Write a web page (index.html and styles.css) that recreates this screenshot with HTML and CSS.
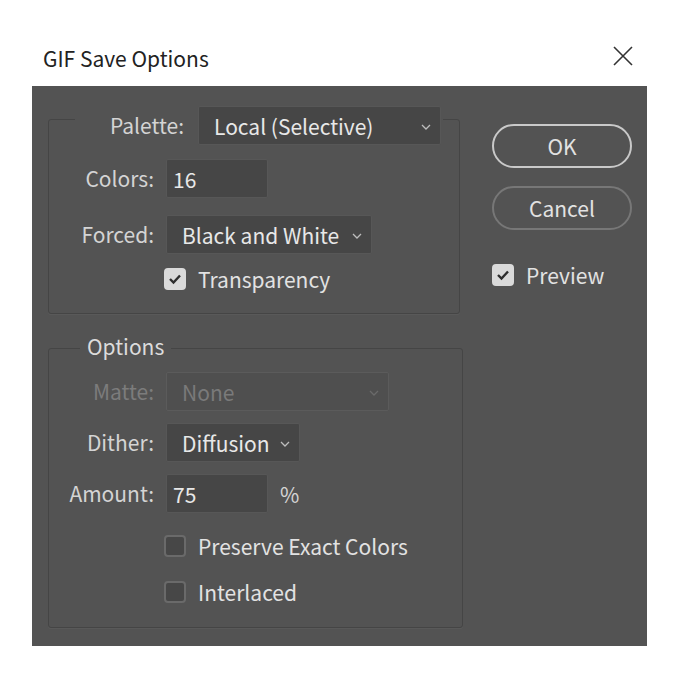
FILE: index.html
```html
<!DOCTYPE html>
<html>
<head>
<meta charset="utf-8">
<title>GIF Save Options</title>
<link rel="stylesheet" href="styles.css">
</head>
<body>
<div class="dialog">
  <div class="titlebar">
    <span class="title">GIF Save Options</span>
    <svg class="close" width="20" height="20" viewBox="0 0 20 20"><path d="M1 1 L19 19 M19 1 L1 19" stroke="#333" stroke-width="1.6" fill="none"/></svg>
  </div>
  <div class="panel">
    <div class="left">
      <div class="group group-palette">
        <div class="legend legend-palette">
          <span class="lbl lbl-palette">Palette:</span>
          <div class="field select w-palette"><span>Local (Selective)</span><svg class="chev" width="10" height="6" viewBox="0 0 10 6"><path d="M1 1 L5 5 L9 1" stroke="#bdbdbd" stroke-width="1.3" fill="none"/></svg></div>
        </div>
        <div class="rows rows-palette">
          <span class="lbl">Colors:</span>
          <div class="field input w-num">16</div>
          <span class="lbl">Forced:</span>
          <div class="field select w-forced"><span>Black and White</span><svg class="chev" width="10" height="6" viewBox="0 0 10 6"><path d="M1 1 L5 5 L9 1" stroke="#bdbdbd" stroke-width="1.3" fill="none"/></svg></div>
          <span></span>
          <div class="check check-transp"><span class="box on"><svg width="14" height="12" viewBox="0 0 14 12"><path d="M2 6 L5.5 9.5 L12 2.5" stroke="#2e2e2e" stroke-width="2.4" fill="none"/></svg></span><span class="ctext">Transparency</span></div>
        </div>
      </div>
      <div class="group group-options">
        <div class="legend legend-options"><span class="lbl-title">Options</span></div>
        <div class="rows rows-options">
          <span class="lbl disabled">Matte:</span>
          <div class="field select w-matte disabled"><span>None</span><svg class="chev" width="10" height="6" viewBox="0 0 10 6"><path d="M1 1 L5 5 L9 1" stroke="#6a6a6a" stroke-width="1.3" fill="none"/></svg></div>
          <span class="lbl">Dither:</span>
          <div class="field select w-dither"><span>Diffusion</span><svg class="chev" width="10" height="6" viewBox="0 0 10 6"><path d="M1 1 L5 5 L9 1" stroke="#bdbdbd" stroke-width="1.3" fill="none"/></svg></div>
          <span class="lbl">Amount:</span>
          <div class="amount"><div class="field input w-num">75</div><span class="pct">%</span></div>
          <span></span>
          <div class="check check-first"><span class="box"></span><span class="ctext">Preserve Exact Colors</span></div>
          <span></span>
          <div class="check check-second"><span class="box"></span><span class="ctext">Interlaced</span></div>
        </div>
      </div>
    </div>
    <div class="right">
      <div class="btn btn-ok">OK</div>
      <div class="btn btn-cancel">Cancel</div>
      <div class="check check-preview"><span class="box on"><svg width="14" height="12" viewBox="0 0 14 12"><path d="M2 6 L5.5 9.5 L12 2.5" stroke="#2e2e2e" stroke-width="2.4" fill="none"/></svg></span><span class="ctext">Preview</span></div>
    </div>
  </div>
</div>
</body>
</html>
```
FILE: styles.css
```css
html, body {
  margin: 0;
  padding: 0;
  background: #ffffff;
}
body {
  font-family: "Noto Sans CJK KR", "Noto Sans", sans-serif;
  padding: 35px 0 0 32px;
}
.dialog {
  width: 615px;
}
.titlebar {
  height: 51px;
  background: #ffffff;
  display: flex;
  align-items: center;
  justify-content: space-between;
  padding: 0 14px 0 11px;
}
.title {
  font-size: 21px;
  color: #222;
  line-height: 24px;
  margin-top: -6px;
}
.close {
  display: block;
  margin-top: -10px;
}
.panel {
  background: #535353;
  height: 560px;
  box-sizing: border-box;
  padding: 33px 15px 0 16px;
  display: flex;
  gap: 29px;
  align-items: flex-start;
  color: #d4d4d4;
  font-size: 21px;
}
.left {
  display: flex;
  flex-direction: column;
  gap: 34px;
}
.group {
  border: 1px solid #454545;
  border-radius: 3px;
  box-sizing: border-box;
  box-shadow: 0 1px 0 rgba(255,255,255,0.04);
}
.group-palette {
  width: 412px;
  height: 195px;
}
.group-options {
  width: 415px;
  height: 280px;
}
.legend {
  display: flex;
  align-items: center;
  background: #535353;
  width: max-content;
}
.legend-palette {
  margin: -14px 0 0 26px;
  padding: 0 2px 0 20px;
  gap: 14px;
}
.lbl-palette {
  width: 89px;
}
.legend-options {
  margin: -16px 0 0 31px;
  padding: 0 7px;
}
.lbl-title {
  color: #dcdcdc;
  line-height: 26px;
}
.lbl {
  line-height: 39px;
  text-align: right;
  white-space: nowrap;
}
.lbl.disabled {
  color: #7c7c7c;
}
.rows {
  display: grid;
  grid-template-columns: 105px auto;
  column-gap: 12px;
  justify-items: start;
  align-items: center;
}
.rows .lbl {
  justify-self: end;
}
.rows-palette {
  margin-top: 14px;
  row-gap: 17px;
}
.rows-options {
  margin-top: 13px;
  row-gap: 12px;
}
.field {
  height: 39px;
  box-sizing: border-box;
  background: #464646;
  border: 1px solid #575757;
  border-radius: 2px;
  color: #e8e8e8;
  display: flex;
  align-items: center;
  white-space: nowrap;
}
.input {
  padding-left: 6px;
}
.select {
  padding: 0 9px 0 15px;
  justify-content: space-between;
}
.chev {
  display: block;
  margin-top: 2px;
}
.w-palette { width: 243px; }
.w-num { width: 102px; }
.w-forced { width: 206px; }
.w-matte { width: 223px; }
.w-dither { width: 134px; }
.select.disabled {
  background: #4f4f4f;
  border-color: #5b5b5b;
  color: #7a7a7a;
}
.amount {
  display: flex;
  align-items: center;
  gap: 12px;
}
.pct {
  color: #d4d4d4;
}
.check {
  display: flex;
  align-items: center;
  gap: 12px;
  height: 22px;
  margin-left: -2px;
  color: #e2e2e2;
}
.check-transp {
  margin-top: -3px;
}
.check-first {
  margin-top: 10px;
}
.check-second {
  margin-top: 12px;
}
.box {
  width: 22px;
  height: 22px;
  box-sizing: border-box;
  border-radius: 4px;
  background: #474747;
  border: 2px solid #6a6a6a;
  display: flex;
  align-items: center;
  justify-content: center;
}
.box.on {
  background: #dadada;
  border-color: #dadada;
}
.ctext {
  line-height: 22px;
}
.right {
  display: flex;
  flex-direction: column;
  width: 140px;
  margin-top: 5px;
}
.btn {
  height: 44px;
  box-sizing: border-box;
  border-radius: 22px;
  display: flex;
  align-items: center;
  justify-content: center;
  color: #e2e2e2;
}
.btn-ok {
  border: 2px solid #c9c9c9;
}
.btn-cancel {
  border: 2px solid #777777;
  margin-top: 18px;
}
.check-preview {
  margin: 34px 0 0 0;
}
```
